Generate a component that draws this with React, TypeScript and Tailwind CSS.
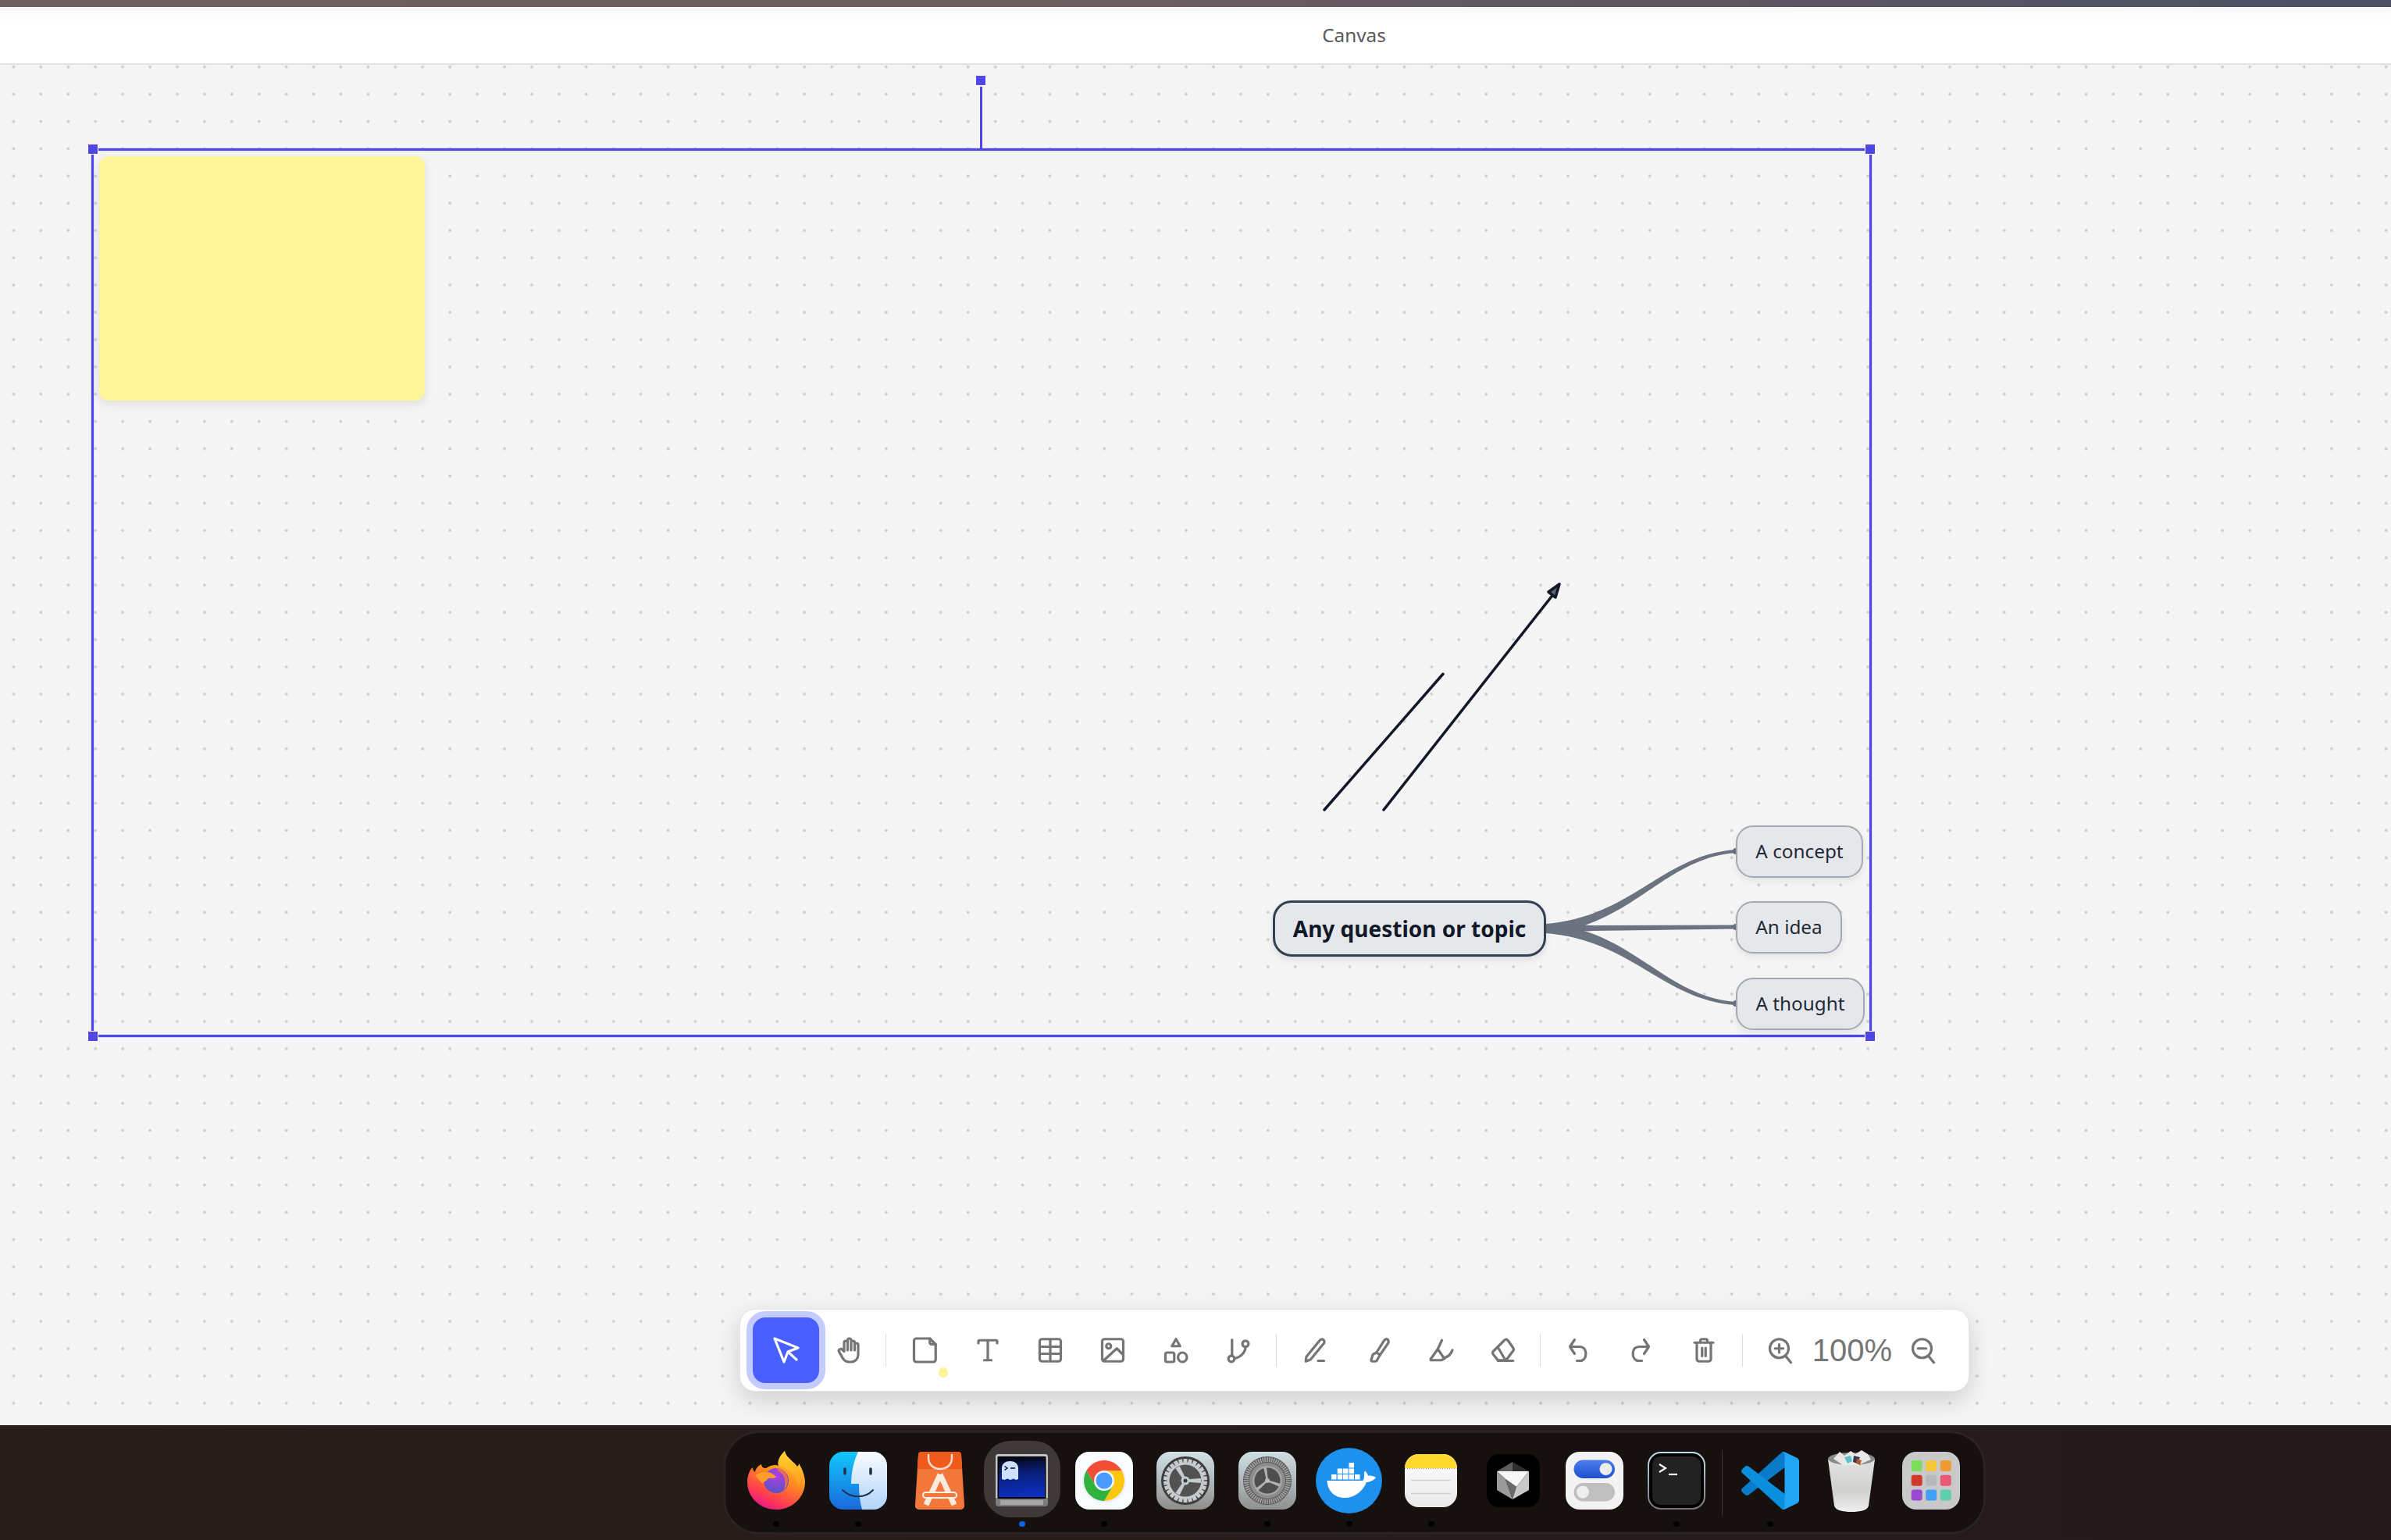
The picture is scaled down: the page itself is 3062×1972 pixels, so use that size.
import React from 'react';

const Stroke: React.FC<{ children: React.ReactNode; size?: number; color?: string; width?: number }> = ({
  children,
  size = 36,
  color = '#757575',
  width = 2.15,
}) => (
  <svg width={size} height={size} viewBox="0 0 24 24" fill="none" stroke={color} strokeWidth={width} strokeLinecap="round" strokeLinejoin="round">
    {children}
  </svg>
);

const HandIcon = () => (
  <Stroke>
    <path d="M8 13v-7.5a1.5 1.5 0 0 1 3 0v6.5M11 5.5v-2a1.5 1.5 0 1 1 3 0v8.5M14 5.5a1.5 1.5 0 0 1 3 0v6.5M17 7.5a1.5 1.5 0 0 1 3 0v8.5a6 6 0 0 1 -6 6h-2h.208a6 6 0 0 1 -5.012 -2.7a69.74 69.74 0 0 1 -.196 -.3c-.312 -.479 -1.407 -2.388 -3.286 -5.728a1.5 1.5 0 0 1 .536 -2.022a1.867 1.867 0 0 1 2.28 .28l1.47 1.47" />
  </Stroke>
);
const NoteIcon = () => (
  <Stroke>
    <path d="M5 2h11.5l5 5v13a2 2 0 0 1-2 2H5a2 2 0 0 1-2-2V4a2 2 0 0 1 2-2z" />
    <path d="M16.5 2v3.5a1.5 1.5 0 0 0 1.5 1.5h3.5" />
  </Stroke>
);
const TextIcon = () => (
  <Stroke>
    <path d="M4 6V4.5a1 1 0 0 1 1-1h14a1 1 0 0 1 1 1V6M12 3.5v17M9 20.5h6" />
  </Stroke>
);
const TableIcon = () => (
  <Stroke>
    <path d="M5 2.5h14a2 2 0 0 1 2 2v15a2 2 0 0 1-2 2H5a2 2 0 0 1-2-2v-15a2 2 0 0 1 2-2zM3 9h18M3 15h18M12 2.5v19" />
  </Stroke>
);
const ImageIcon = () => (
  <Stroke>
    <path d="M5 2.5h14a2 2 0 0 1 2 2v15a2 2 0 0 1-2 2H5a2 2 0 0 1-2-2v-15a2 2 0 0 1 2-2z" />
    <circle cx="8.5" cy="8.5" r="2" />
    <path d="M4 21l11.5-10.5 5.5 5.5" />
  </Stroke>
);
const ShapesIcon = () => (
  <Stroke>
    <path d="M12 2.5l3.5 6h-7z" />
    <rect x="3" y="14" width="7.5" height="8" rx="1.5" />
    <ellipse cx="17.5" cy="18" rx="3.8" ry="4" />
  </Stroke>
);
const ConnectorIcon = () => (
  <Stroke>
    <path d="M6.5 3v13.5" />
    <circle cx="6" cy="19.3" r="2.6" />
    <circle cx="18" cy="6.5" r="2.6" />
    <path d="M18 9.2c0 4.5-4 8.8-9.4 9.8" />
  </Stroke>
);
const PenIcon = () => (
  <Stroke>
    <path d="M3.5 21.5l.5-4L15.5 3.5a2.1 2.1 0 0 1 3.4 2.6L7.5 20l-4 1.5zM14 21h5" />
  </Stroke>
);
const BrushIcon = () => (
  <Stroke>
    <path d="M20 2.8c-1.2-.8-2.4 0-3 1L10.500 14l3 2 6.800-9.800c.6-1 .8-2.400-.3-3.400z" />
    <path d="M10.500 14l-3 1.500L6 20.300a1 1 0 0 0 1 1.200h2.500a1.500 1.500 0 0 0 1.500-1l2.500-4.500" />
  </Stroke>
);
const HighlighterIcon = () => (
  <Stroke>
    <path d="M13 3.500l-3.500 7.500M9.500 11l-6 8.500v1h9l3-1.500M9.500 11l5.500 8M15 18.500c3-.5 5.500-3 7-6.500" />
  </Stroke>
);
const EraserIcon = () => (
  <Stroke>
    <path d="M13 3.500a2 2 0 0 1 3 0l4.500 6.500a2 2 0 0 1 0 2.500l-6 8H7.500l-4-5a2 2 0 0 1 0-2.500zM7.500 9.500L14 20.500M7.500 21h13" />
  </Stroke>
);
const UndoIcon = () => (
  <Stroke>
    <path d="M9 3L5 9l4 6M5 9h8.500a5 5 0 0 1 5 5v2a5 5 0 0 1-5 5H11" />
  </Stroke>
);
const RedoIcon = () => (
  <Stroke>
    <path d="M15 3l4 6-4 6M19 9h-8.500a5 5 0 0 0-5 5v2a5 5 0 0 0 5 5H13" />
  </Stroke>
);
const TrashIcon = () => (
  <Stroke>
    <path d="M4 5.500h16M9 5.500V4a1.500 1.500 0 0 1 1.500-1.500h3A1.500 1.500 0 0 1 15 4v1.500M6 5.500v14a2 2 0 0 0 2 2h8a2 2 0 0 0 2-2v-14M10.500 10v7M13.500 10v7" />
  </Stroke>
);
const ZoomInIcon = () => (
  <Stroke>
    <circle cx="11" cy="10.500" r="8" />
    <path d="M16.500 17l4.500 5.500M7.500 10.500h7M11 7v7" />
  </Stroke>
);
const ZoomOutIcon = () => (
  <Stroke>
    <circle cx="11" cy="10.500" r="8" />
    <path d="M16.500 17l4.500 5.500M7.500 10.500h7" />
  </Stroke>
);

const ToolButton: React.FC<{ children: React.ReactNode; className?: string }> = ({ children, className = 'w-[80.4px]' }) => (
  <button className={`flex h-[60px] shrink-0 items-center justify-center ${className}`}>{children}</button>
);

const Divider: React.FC<{ className: string }> = ({ className }) => <div className={`h-[42px] w-px shrink-0 bg-[#dedede] ${className}`} />;

const Toolbar = () => (
  <div className="absolute left-[947px] top-[1593px] flex h-[106px] w-[1575px] items-center rounded-[20px] border border-[#e6e6e6] bg-white pl-[16px] shadow-[0_10px_32px_rgba(0,0,0,0.16)]">
    <button className="flex h-[84px] w-[85px] shrink-0 items-center justify-center rounded-[16px] bg-[#4a5fff] shadow-[0_0_0_8px_#c4ccff]">
      <svg width="40" height="40" viewBox="0 0 40 40" fill="none" stroke="#fff" strokeWidth="3.2" strokeLinecap="round" strokeLinejoin="round">
        <path d="M5 5l30 12-13 5-5 13zM22 22l11 10" />
      </svg>
    </button>
    <ToolButton className="w-[76px]"><HandIcon /></ToolButton>
    <Divider className="ml-[9px] mr-[9px]" />
    <div className="relative">
      <ToolButton><NoteIcon /></ToolButton>
      <span className="absolute bottom-[-5px] left-[58px] h-[13px] w-[12px] rounded-full bg-[#fdf39a]" />
    </div>
    <ToolButton><TextIcon /></ToolButton>
    <ToolButton><TableIcon /></ToolButton>
    <ToolButton><ImageIcon /></ToolButton>
    <ToolButton><ShapesIcon /></ToolButton>
    <ToolButton><ConnectorIcon /></ToolButton>
    <Divider className="ml-[8px] mr-[10px]" />
    <ToolButton className="w-[80px]"><PenIcon /></ToolButton>
    <ToolButton className="w-[80px]"><BrushIcon /></ToolButton>
    <ToolButton className="w-[80px]"><HighlighterIcon /></ToolButton>
    <ToolButton className="w-[80px]"><EraserIcon /></ToolButton>
    <Divider className="ml-[7px] mr-[8px]" />
    <ToolButton className="w-[80px]"><UndoIcon /></ToolButton>
    <ToolButton className="w-[80px]"><RedoIcon /></ToolButton>
    <ToolButton className="w-[82px]"><TrashIcon /></ToolButton>
    <Divider className="ml-[8px] mr-[8px]" />
    <ToolButton className="w-[80px]"><ZoomInIcon /></ToolButton>
    <span className="w-[103px] shrink-0 text-center font-['Liberation_Sans',sans-serif] text-[40px] leading-none text-[#757575]">100%</span>
    <ToolButton className="w-[80px]"><ZoomOutIcon /></ToolButton>
  </div>
);

const Handle: React.FC<{ className: string }> = ({ className }) => (
  <div className={`absolute h-[14px] w-[14px] border border-white bg-[#4f46e5] ${className}`} />
);

const Selection = () => (
  <div className="absolute left-[117px] top-[107px] h-[1138px] w-[2280px] border-[3px] border-[#4f46e5] shadow-[0_0_1px_#4f46e5,inset_0_0_1px_#4f46e5]">
    <div className="absolute left-[1135px] top-[-82px] h-[80px] w-[3px] bg-[#4f46e5]" />
    <Handle className="left-[1129px] top-[-97px]" />
    <Handle className="left-[-8px] top-[-9px]" />
    <Handle className="right-[-8px] top-[-9px]" />
    <Handle className="bottom-[-9px] left-[-8px]" />
    <Handle className="bottom-[-9px] right-[-8px]" />
  </div>
);

const MindNode: React.FC<{ label: string; className: string }> = ({ label, className }) => (
  <div className={`absolute flex items-center justify-center rounded-[22px] border-2 border-[#a3a9b4] bg-[#e6e7eb] font-['Noto_Sans',sans-serif] text-[24.3px] text-[#1f2937] shadow-[0_4px_10px_rgba(0,0,0,0.08)] ${className}`}>
    {label}
  </div>
);

const Drawings = () => (
  <svg className="absolute left-0 top-0" width="3062" height="1742" viewBox="0 83 3062 1742" fill="none">
    <path d="M1696 1037L1848 863" stroke="#111827" strokeWidth="3.5" strokeLinecap="round" />
    <path d="M1772 1037L1990 760" stroke="#111827" strokeWidth="3.5" strokeLinecap="round" />
    <path d="M1997 748L1983 758L1992 765Z" stroke="#111827" strokeWidth="3.5" strokeLinejoin="round" fill="#5b6270" />
    <path d="M1980 1183C2090 1174 2130 1094 2223 1088L2223 1092C2130 1099 2090 1186 1980 1195Z" fill="#6b7280" />
    <path d="M1980 1183L2040 1185L2223 1184.500L2223 1189.500L2040 1192L1980 1195Z" fill="#6b7280" />
    <path d="M1980 1183C2090 1190 2130 1276 2223 1283L2223 1287C2130 1281 2090 1204 1980 1195Z" fill="#6b7280" />
    <circle cx="2223" cy="1090" r="4" fill="#6b7280" />
    <circle cx="2223" cy="1187" r="4" fill="#6b7280" />
    <circle cx="2223" cy="1285" r="4" fill="#6b7280" />
  </svg>
);

const Canvas = () => (
  <main className="relative flex-1 bg-[#f5f5f5] bg-[radial-gradient(circle,#cfcfcf_1.7px,transparent_2.3px)] bg-[length:34.93px_34.93px] bg-[position:0px_-14.8px]">
    <div className="absolute left-[127px] top-[117px] h-[313px] w-[417px] rounded-[12px] bg-[#fef49a] shadow-[0_4px_14px_rgba(0,0,0,0.1)]" />
    <Drawings />
    <Selection />
    <div className="absolute left-[1630px] top-[1070px] flex h-[72px] w-[350px] items-center justify-center rounded-[24px] border-[3px] border-[#334155] bg-[#e5e7eb] font-['Noto_Sans',sans-serif] text-[28px] font-bold text-[#111827] shadow-[0_4px_10px_rgba(0,0,0,0.1)]">
      Any question or topic
    </div>
    <MindNode label="A concept" className="left-[2223px] top-[974px] h-[67px] w-[163px]" />
    <MindNode label="An idea" className="left-[2223px] top-[1071px] h-[67px] w-[136px]" />
    <MindNode label="A thought" className="left-[2223px] top-[1169px] h-[67px] w-[165px]" />
    <Toolbar />
  </main>
);

const Firefox = () => (
  <svg width="74" height="75" viewBox="0 0 74 75">
    <defs>
      <linearGradient id="ffBody" x1="0.8" y1="0" x2="0.3" y2="1">
        <stop offset="0" stopColor="#ffe03a" />
        <stop offset="0.45" stopColor="#ff8a1f" />
        <stop offset="0.8" stopColor="#ff3b50" />
        <stop offset="1" stopColor="#e5158e" />
      </linearGradient>
      <linearGradient id="ffFlame" x1="0.5" y1="0" x2="0.5" y2="1">
        <stop offset="0" stopColor="#ffd52e" />
        <stop offset="1" stopColor="#ff9a1e" />
      </linearGradient>
      <radialGradient id="ffGlobe" cx="0.5" cy="0.3" r="0.8">
        <stop offset="0" stopColor="#b33fe6" />
        <stop offset="1" stopColor="#4a55bb" />
      </radialGradient>
    </defs>
    <path d="M37 75C15 75 0 58 0 40C0 32 3 24 7 21C7 24 8 26 10 27C11 22 14 19 18 17C18 20 20 22 24 22C30 18 36 17 40 19C38 12 43 5 48 0C49 8 58 12 64 20C65 19 66 18 66 16C70 22 74 32 74 40C74 58 59 75 37 75Z" fill="url(#ffBody)" />
    <path d="M40 19C38 12 43 5 48 0C49 8 58 12 64 20C68 27 70 36 66 46C65 34 56 24 40 19Z" fill="url(#ffFlame)" />
    <circle cx="37" cy="38" r="16" fill="url(#ffGlobe)" />
    <path d="M10 31C16 27 22 26 26 27C32 28 34 31 37 33C34 36 30 34 27 35C25 38 21 39 20 42C16 38 13 35 10 31Z" fill="#ff9d2a" />
    <path d="M37 22C44 22 52 28 52 38C52 44 49 48 46 50C50 44 49 34 44 29C42 27 39 25 37 22Z" fill="#ff7139" opacity="0.85" />
  </svg>
);

const Finder = () => (
  <svg width="74" height="74" viewBox="0 0 74 74">
    <defs>
      <linearGradient id="fdL" x1="0" y1="0" x2="0" y2="1">
        <stop offset="0" stopColor="#12c8fb" />
        <stop offset="1" stopColor="#1a68dc" />
      </linearGradient>
      <linearGradient id="fdR" x1="0" y1="0" x2="0" y2="1">
        <stop offset="0" stopColor="#f8fbff" />
        <stop offset="1" stopColor="#b2d4fb" />
      </linearGradient>
    </defs>
    <rect width="74" height="74" rx="18" fill="url(#fdL)" />
    <path d="M37 0C31 12 28 28 28 41H38C38 52 39 64 42 74H56A18 18 0 0 0 74 56V18A18 18 0 0 0 56 0Z" fill="url(#fdR)" />
    <path d="M20 22v6M53 22v6" stroke="#20304f" strokeWidth="3.5" strokeLinecap="round" />
    <path d="M17 49C28 60 46 60 56 49" stroke="#20304f" strokeWidth="2" fill="none" strokeLinecap="round" />
  </svg>
);

const AppStore = () => (
  <svg width="63" height="74" viewBox="0 0 63 74">
    <path d="M8 0H55a4 4 0 0 1 4 3.500L63 68a5 5 0 0 1-5 6H5a5 5 0 0 1-5-6L4 3.500A4 4 0 0 1 8 0Z" fill="#f3773a" />
    <path d="M8 0H55a4 4 0 0 1 4 3.500L60.200 22H2.800L4 3.500A4 4 0 0 1 8 0Z" fill="#ef5a1d" />
    <path d="M17 4V8C17 16 23 22 32 22C41 22 47 16 47 8V4" stroke="#f9dccb" strokeWidth="2.500" fill="none" strokeLinecap="round" />
    <path d="M32 29L14 68M32 29L50 68" stroke="#fdeadf" strokeWidth="7" fill="none" />
    <rect x="10" y="52" width="43" height="7" rx="3.500" fill="#f3773a" stroke="#fff1e8" strokeWidth="2" />
  </svg>
);

const Ghostty = () => (
  <svg width="67" height="67" viewBox="0 0 67 67">
    <defs>
      <linearGradient id="gtScr" x1="0.3" y1="0" x2="0.4" y2="1">
        <stop offset="0" stopColor="#03050f" />
        <stop offset="0.4" stopColor="#0a1f78" />
        <stop offset="1" stopColor="#0c2fc2" />
      </linearGradient>
      <linearGradient id="gtChin" x1="0" y1="0" x2="0" y2="1">
        <stop offset="0" stopColor="#9c9c9c" />
        <stop offset="1" stopColor="#7a7a7a" />
      </linearGradient>
    </defs>
    <rect width="67" height="67" rx="4" fill="url(#gtChin)" />
    <path d="M4 0H63a4 4 0 0 1 4 4V56H0V4A4 4 0 0 1 4 0Z" fill="#c4c4c4" />
    <rect x="2.500" y="3" width="62" height="54" rx="1" fill="#000" />
    <rect x="4" y="4" width="59" height="51" fill="url(#gtScr)" />
    <path d="M8 18C8 12 13 9 18.500 9C24 9 29 12 29 18V32L26 33L23 31.500L19 33L15 31.500L11.500 33L8 32Z" fill="#cfe0ff" />
    <path d="M11.500 15.500l3.500 2.500-3.500 2.500" stroke="#0a0f22" strokeWidth="1.500" fill="none" />
    <path d="M19 18h6" stroke="#0a0f22" strokeWidth="1.500" />
    <rect x="6" y="59" width="55" height="6" fill="#a6a6a6" />
  </svg>
);

const Chrome = () => {
  const wedge = 'M14.500 24A26 26 0 0 1 59.500 24L37 24L25.700 43.500Z';
  return (
    <svg width="74" height="74" viewBox="0 0 74 74">
      <rect width="74" height="74" rx="18" fill="#fafbff" />
      <circle cx="37" cy="38" r="28" fill="#dfe6f5" opacity="0.5" />
      <path d={wedge} fill="#f04e37" />
      <path d={wedge} fill="#fcc70c" transform="rotate(120 37 37)" />
      <path d={wedge} fill="#30b23f" transform="rotate(240 37 37)" />
      <circle cx="37" cy="37" r="13" fill="#f2f4f7" />
      <circle cx="37" cy="37" r="10.500" fill="#4a9bff" />
    </svg>
  );
};

const SystemSettings = () => {
  const teeth = Array.from({ length: 26 }, (_, i) => (i * 360) / 26);
  return (
    <svg width="74" height="74" viewBox="0 0 74 74">
      <defs>
        <linearGradient id="ss1" x1="0" y1="0" x2="0" y2="1">
          <stop offset="0" stopColor="#d2e2e8" />
          <stop offset="1" stopColor="#8e8e8b" />
        </linearGradient>
      </defs>
      <rect width="74" height="74" rx="18" fill="url(#ss1)" />
      <circle cx="37" cy="37" r="31" fill="#3d3d3d" />
      {teeth.map((a) => (
        <rect key={a} x="34.500" y="9" width="5" height="6" fill="#c6cbcd" transform={`rotate(${a} 37 37)`} />
      ))}
      <circle cx="37" cy="37" r="23.500" fill="#c6cbcd" />
      <circle cx="37" cy="37" r="20.500" fill="#525252" />
      {[90, 210, 330].map((a) => (
        <path key={a} d="M35.500 37L34 17H40L38.500 37Z" fill="#c6cbcd" transform={`rotate(${a} 37 37)`} />
      ))}
      <circle cx="37" cy="37" r="5.500" fill="#c6cbcd" />
      <circle cx="37" cy="37" r="2.500" fill="#3d3d3d" />
    </svg>
  );
};

const SystemPrefs = () => {
  const ticks = Array.from({ length: 60 }, (_, i) => i * 6);
  return (
    <svg width="74" height="74" viewBox="0 0 74 74">
      <defs>
        <linearGradient id="ss2" x1="0" y1="0" x2="0" y2="1">
          <stop offset="0" stopColor="#d0dfe4" />
          <stop offset="1" stopColor="#909090" />
        </linearGradient>
      </defs>
      <rect width="74" height="74" rx="18" fill="url(#ss2)" />
      <circle cx="37" cy="37" r="31" fill="#5c5c5c" />
      {ticks.map((a) => (
        <rect key={a} x="36.300" y="7" width="1.500" height="6" fill="#a8a8a8" transform={`rotate(${a} 37 37)`} />
      ))}
      <circle cx="37" cy="37" r="23" fill="#8c8c8c" />
      <circle cx="37" cy="37" r="19" fill="#a4a4a4" />
      <circle cx="37" cy="37" r="16.500" fill="#4e4e4e" />
      {[-10, 110, 230].map((a) => (
        <path key={a} d="M36 37L35 20H39L38 37Z" fill="#b2b2b2" transform={`rotate(${a} 37 37)`} />
      ))}
      <circle cx="37" cy="37" r="3" fill="#bbb" />
    </svg>
  );
};

const Docker = () => (
  <svg width="85" height="84" viewBox="0 0 85 84">
    <ellipse cx="42.500" cy="42" rx="42.500" ry="42" fill="#1d91ed" />
    <g fill="#fff">
      <rect x="20" y="34" width="6.500" height="6.500" />
      <rect x="27.700" y="34" width="6.500" height="6.500" />
      <rect x="35" y="34" width="6.500" height="6.500" />
      <rect x="42.500" y="34" width="6.500" height="6.500" />
      <rect x="50" y="34" width="6.500" height="6.500" />
      <rect x="27.700" y="26.500" width="6.500" height="6.500" />
      <rect x="35" y="26.500" width="6.500" height="6.500" />
      <rect x="42.500" y="26.500" width="6.500" height="6.500" />
      <rect x="42.500" y="19" width="6.500" height="6.500" />
      <path d="M14.500 42H60C62 42 62 36 62 33C62 30 63 29 63.500 30C66 32 67 35 67 36C70 35 74 36 77 38C74 42 68 44 65 44C60 56 50 64 37 64C24 64 15 55 14.500 42Z" />
    </g>
  </svg>
);

const Notes = () => (
  <svg width="67" height="68" viewBox="0 0 67 68">
    <defs>
      <linearGradient id="ntB" x1="0" y1="0" x2="0" y2="1">
        <stop offset="0" stopColor="#fefefe" />
        <stop offset="1" stopColor="#e9e9e9" />
      </linearGradient>
    </defs>
    <rect width="67" height="68" rx="18" fill="url(#ntB)" />
    <path d="M18 0H49A18 18 0 0 1 67 18H0A18 18 0 0 1 18 0Z" fill="#fed92f" />
    <path d="M0 18.500H67" stroke="#9a8f68" strokeWidth="1" strokeDasharray="1 2" />
    <path d="M8 33.500H59M8 50.500H59" stroke="#cfcfcf" strokeWidth="1.500" />
  </svg>
);

const Crystal = () => (
  <svg width="68" height="68" viewBox="0 0 68 68">
    <rect width="68" height="68" rx="16" fill="#000" />
    <path d="M33 10L13 22L33 24Z" fill="#5e5e5e" />
    <path d="M33 10L54 22L33 24Z" fill="#2e2e2e" />
    <path d="M13 22L54 22L38 42L24 32Z" fill="#f7f7f7" />
    <path d="M13 22L24 32L33 58L13 46Z" fill="#9a9a9a" />
    <path d="M24 32L38 42L33 58Z" fill="#6a6a6a" />
    <path d="M54 22L38 42L33 58L54 46Z" fill="#c9c9c9" />
  </svg>
);

const Toggles = () => (
  <svg width="74" height="74" viewBox="0 0 74 74">
    <defs>
      <linearGradient id="tgB" x1="0" y1="0" x2="0" y2="1">
        <stop offset="0" stopColor="#4b7fe9" />
        <stop offset="1" stopColor="#1f4fd2" />
      </linearGradient>
    </defs>
    <rect width="74" height="74" rx="18" fill="#f3f3f3" />
    <rect x="10.500" y="10.500" width="52.500" height="23.500" rx="11.750" fill="url(#tgB)" />
    <circle cx="51.500" cy="22.200" r="8" fill="#ececec" />
    <rect x="10.500" y="40" width="52.500" height="23.500" rx="11.750" fill="#bfbfbf" />
    <circle cx="22" cy="51.700" r="8" fill="#eeeeee" />
  </svg>
);

const Terminal = () => (
  <svg width="74" height="74" viewBox="0 0 74 74">
    <defs>
      <linearGradient id="trB" x1="0" y1="0" x2="0" y2="1">
        <stop offset="0" stopColor="#bfe0ea" />
        <stop offset="1" stopColor="#777" />
      </linearGradient>
    </defs>
    <rect x="1" y="1" width="72" height="72" rx="16" fill="#000" stroke="url(#trB)" strokeWidth="2" />
    <rect x="6" y="6" width="62" height="62" rx="10" fill="#222" />
    <path d="M15 16l8 5-8 5" stroke="#fff" strokeWidth="2.200" fill="none" />
    <path d="M27 29h11" stroke="#fff" strokeWidth="2.200" />
  </svg>
);

const VsCode = () => (
  <svg width="74" height="74" viewBox="0 0 100 100">
    <path d="M96.4614 10.7962L75.8569 0.875542C73.4719 -0.272773 70.6217 0.211611 68.75 2.08333L1.29858 63.5832C-0.515693 65.2373 -0.513607 68.0937 1.30308 69.7452L6.81272 74.754C8.29793 76.1042 10.5347 76.2036 12.1338 74.9905L93.3609 13.3699C96.086 11.3026 100 13.2462 100 16.6667V16.4275C100 14.0265 98.6246 11.8378 96.4614 10.7962Z" fill="#0a7bc8" />
    <path d="M96.4614 89.2038L75.8569 99.1245C73.4719 100.273 70.6217 99.7884 68.75 97.9167L1.29858 36.4168C-0.515693 34.7627 -0.513607 31.9063 1.30308 30.2548L6.81272 25.246C8.29793 23.8958 10.5347 23.7964 12.1338 25.0095L93.3609 86.6301C96.086 88.6974 100 86.7538 100 83.3333V83.5725C100 85.9735 98.6246 88.1622 96.4614 89.2038Z" fill="#0a8fdf" />
    <path d="M75.8578 99.1263C73.4721 100.274 70.6219 99.7885 68.75 97.9166C71.0564 100.223 75 98.5895 75 95.3278V4.67213C75 1.41039 71.0564 -0.223106 68.75 2.08329C70.6219 0.211402 73.4721 -0.273666 75.8578 0.873633L96.4587 10.7807C98.6234 11.8217 100 14.0112 100 16.4132V83.5871C100 85.9891 98.6234 88.1786 96.4586 89.2196L75.8578 99.1263Z" fill="#20a6f5" />
  </svg>
);

const Bin = () => (
  <svg width="62" height="80" viewBox="0 0 62 80">
    <defs>
      <linearGradient id="bnG" x1="0" y1="0" x2="0" y2="1">
        <stop offset="0" stopColor="#e2e2e2" />
        <stop offset="0.6" stopColor="#d0d0ce" />
        <stop offset="1" stopColor="#efefef" />
      </linearGradient>
    </defs>
    <path d="M1 13L9 72C10 78 20 80 31 80C42 80 52 78 53 72L61 13Z" fill="url(#bnG)" />
    <ellipse cx="31" cy="12" rx="30" ry="8" fill="#8a8a8a" />
    <path d="M8 12L16 3L22 8L30 2L36 6L44 1L52 6L56 13L40 20H20Z" fill="#e8e8e8" />
    <path d="M22 10L30 8L32 15L26 18Z" fill="#5ec0d0" />
    <path d="M34 8L42 10L38 18L33 16Z" fill="#3b3a52" />
    <path d="M38 12L44 14L42 20L37 18Z" fill="#b25a2a" />
  </svg>
);

const Launchpad = () => {
  const colors = ['#7ade5a', '#f6c63c', '#f09a35', '#cf3a2a', '#b5b9bb', '#e85a75', '#9a4ad0', '#3fa0f5', '#5fd0ae'];
  return (
    <svg width="74" height="74" viewBox="0 0 74 74">
      <rect width="74" height="74" rx="18" fill="#c9c9c9" />
      {colors.map((c, i) => (
        <rect key={c} x={11.7 + (i % 3) * 18.5} y={11 + Math.floor(i / 3) * 18.7} width="14" height="14" rx="3" fill={c} />
      ))}
    </svg>
  );
};

const DockItem: React.FC<{ children: React.ReactNode; dot?: boolean; active?: boolean; className?: string }> = ({
  children,
  dot,
  active,
  className = 'w-[104.8px]',
}) => (
  <div className={`relative flex h-full shrink-0 items-center justify-center pb-[6px] ${className}`}>
    {active && <div className="absolute left-[3.500px] top-[10px] h-[98px] w-[98px] rounded-[34px] bg-[#3f3a39]" />}
    <div className="relative flex">{children}</div>
    {dot && <span className={`absolute bottom-[7px] left-1/2 h-[7px] w-[8px] -translate-x-1/2 rounded-full ${active ? 'bg-[#0a62e6]' : 'bg-black'}`} />}
  </div>
);

const Dock = () => (
  <footer className="flex h-[147px] shrink-0 justify-start bg-gradient-to-r from-[#2a1e1b] to-[#241a19] pl-[926px] pt-[7px]">
    <div className="flex h-[133px] w-[1617px] items-center rounded-[46px] border-[3px] border-[#2c2321] bg-[#16100f] pl-[13px]">
      <DockItem dot><Firefox /></DockItem>
      <DockItem dot><Finder /></DockItem>
      <DockItem><AppStore /></DockItem>
      <DockItem dot active><Ghostty /></DockItem>
      <DockItem dot><Chrome /></DockItem>
      <DockItem><SystemSettings /></DockItem>
      <DockItem dot><SystemPrefs /></DockItem>
      <DockItem dot><Docker /></DockItem>
      <DockItem dot><Notes /></DockItem>
      <DockItem><Crystal /></DockItem>
      <DockItem><Toggles /></DockItem>
      <DockItem dot><Terminal /></DockItem>
      <div className="ml-[5px] mr-[9px] h-[84px] w-px shrink-0 bg-[#3a3331]" />
      <DockItem dot><VsCode /></DockItem>
      <DockItem className="w-[103px]"><Bin /></DockItem>
      <DockItem className="w-[102px]"><Launchpad /></DockItem>
    </div>
  </footer>
);

export default function App() {
  return (
    <div className="flex h-[1972px] w-[3062px] flex-col overflow-hidden">
      <div className="h-[9px] shrink-0 bg-gradient-to-r from-[#70605d] via-[#6a5c60] to-[#4c5063]" />
      <header className="flex h-[74px] shrink-0 items-center justify-center border-b-2 border-[#e2e2e2] bg-gradient-to-b from-[#f8f8f8] to-white to-[35%] pl-[406px] font-['Noto_Sans',sans-serif] text-[24.3px] text-[#5a5a5a]">
        Canvas
      </header>
      <Canvas />
      <Dock />
    </div>
  );
}
